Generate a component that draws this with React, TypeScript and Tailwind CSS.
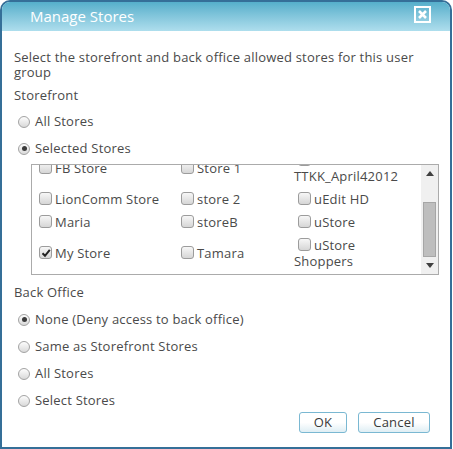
import React from "react";

type Store = { label: string; lines?: string[]; checked?: boolean; wrapBox?: boolean };

// visible part of the store list (the list is scrolled down a little)
const ROWS: Store[][] = [
  [{ label: "FB Store" }, { label: "Store 1" }, { label: "TTKK_April42012", wrapBox: true }],
  [{ label: "LionComm Store" }, { label: "store 2" }, { label: "uEdit HD" }],
  [{ label: "Maria" }, { label: "storeB" }, { label: "uStore" }],
  [{ label: "My Store", checked: true }, { label: "Tamara" }, { label: "uStore", lines: ["Shoppers"] }],
];

function Radio({ checked }: { checked?: boolean }) {
  return (
    <span className="relative inline-flex w-[12px] h-[12px] shrink-0 rounded-full border border-[#a3a3a3] bg-gradient-to-b from-[#fdfdfd] to-[#d9d9d9] items-center justify-center">
      {checked && <span className="w-[5px] h-[5px] rounded-full bg-[#3c3c3c]" />}
    </span>
  );
}

function Checkbox({ checked }: { checked?: boolean }) {
  return (
    <span className="inline-flex w-[13px] h-[13px] shrink-0 rounded-[3px] border border-[#9c9c9c] bg-gradient-to-b from-[#f7f7f7] to-[#d6d6d6] items-center justify-center">
      {checked && (
        <svg width="10" height="10" viewBox="0 0 10 10">
          <path d="M1.5 5.2 L4 7.8 L8.8 1.8" fill="none" stroke="#222" strokeWidth="2" />
        </svg>
      )}
    </span>
  );
}

function RadioRow({ label, checked }: { label: string; checked?: boolean }) {
  return (
    <div className="h-[27px] flex items-center gap-[5px] pl-[4px]">
      <Radio checked={checked} />
      <span>{label}</span>
    </div>
  );
}

function StoreCell({ store }: { store: Store }) {
  if (store.wrapBox) {
    return (
      <div className="leading-[16px]">
        <div className="pl-[4px] h-[16px] flex items-center">
          <Checkbox />
        </div>
        <div>{store.label}</div>
      </div>
    );
  }
  return (
    <div className="leading-[16px]">
      <div className="flex items-center gap-[3px] pl-[4px]">
        <Checkbox checked={store.checked} />
        <span>{store.label}</span>
      </div>
      {store.lines?.map((l) => (
        <div key={l}>{l}</div>
      ))}
    </div>
  );
}

function Triangle({ up }: { up?: boolean }) {
  return (
    <svg width="8" height="5" viewBox="0 0 8 5">
      <path d={up ? "M0 5 L4 0 L8 5 Z" : "M0 0 L8 0 L4 5 Z"} fill="#404040" />
    </svg>
  );
}

function Button({ children, w }: { children: React.ReactNode; w: string }) {
  return (
    <button
      className={`${w} h-[21px] rounded-[3px] border border-[#7ab8d2] bg-gradient-to-b from-white via-white to-[#dfeef4] text-[#3a3a3a] text-[13px] leading-none`}
    >
      {children}
    </button>
  );
}

export default function App() {
  return (
    <div className="w-[452px] h-[449px] border-2 border-[#356f98] rounded-t-[10px] bg-white flex flex-col overflow-hidden font-['Open_Sans',sans-serif] text-[13px] tracking-[0.2px] text-[#4a4a4a]">
      {/* Title bar */}
      <div className="h-[29px] shrink-0 bg-gradient-to-b from-[#55afcb] to-[#aedeed] flex items-start justify-between pl-[28px] pr-[19px]">
        <span className="text-white text-[15px] tracking-normal leading-[29px]">Manage Stores</span>
        <span className="mt-[4px] w-[17px] h-[17px] border-2 border-white flex items-center justify-center">
          <svg width="9" height="9" viewBox="0 0 9 9">
            <path d="M1 1 L8 8 M8 1 L1 8" stroke="white" strokeWidth="2.6" />
          </svg>
        </span>
      </div>

      <div className="pl-[12px] pr-[9px]">
        <p className="mt-[19px] leading-[15px] pr-[3px]">
          Select the storefront and back office allowed stores for this user group
        </p>

        <div className="mt-[8px] leading-[15px]">Storefront</div>
        <div className="mt-[5px]">
          <RadioRow label="All Stores" />
          <RadioRow label="Selected Stores" checked />
        </div>

        {/* Store list */}
        <div className="ml-[17px] mt-[2px] w-[408px] h-[111px] border border-[#ababab] flex">
          <div className="flex-1 overflow-hidden">
            <div className="mt-[-17px] pl-[3px] grid grid-cols-[142px_117px_1fr] grid-rows-[39px_23px_23px_39px] items-center">
              {ROWS.map((row, i) =>
                row.map((s, j) => <StoreCell key={`${i}-${j}`} store={s} />)
              )}
            </div>
          </div>
          {/* Scrollbar */}
          <div className="w-[17px] bg-[#f0f0f0] flex flex-col">
            <div className="h-[17px] flex items-center justify-center">
              <Triangle up />
            </div>
            <div className="flex-1 px-[2px]">
              <div className="mt-[20px] h-[55px] bg-[#bebebe] border border-[#a6a6a6]" />
            </div>
            <div className="h-[17px] flex items-center justify-center">
              <Triangle />
            </div>
          </div>
        </div>

        <div className="mt-[10px] leading-[15px]">Back Office</div>
        <div className="mt-[6px]">
          <RadioRow label="None (Deny access to back office)" checked />
          <RadioRow label="Same as Storefront Stores" />
          <RadioRow label="All Stores" />
          <RadioRow label="Select Stores" />
        </div>

        <div className="mt-[-2px] pr-[11px] flex justify-end gap-[11px]">
          <Button w="w-[48px]">OK</Button>
          <Button w="w-[72px]">Cancel</Button>
        </div>
      </div>
    </div>
  );
}
